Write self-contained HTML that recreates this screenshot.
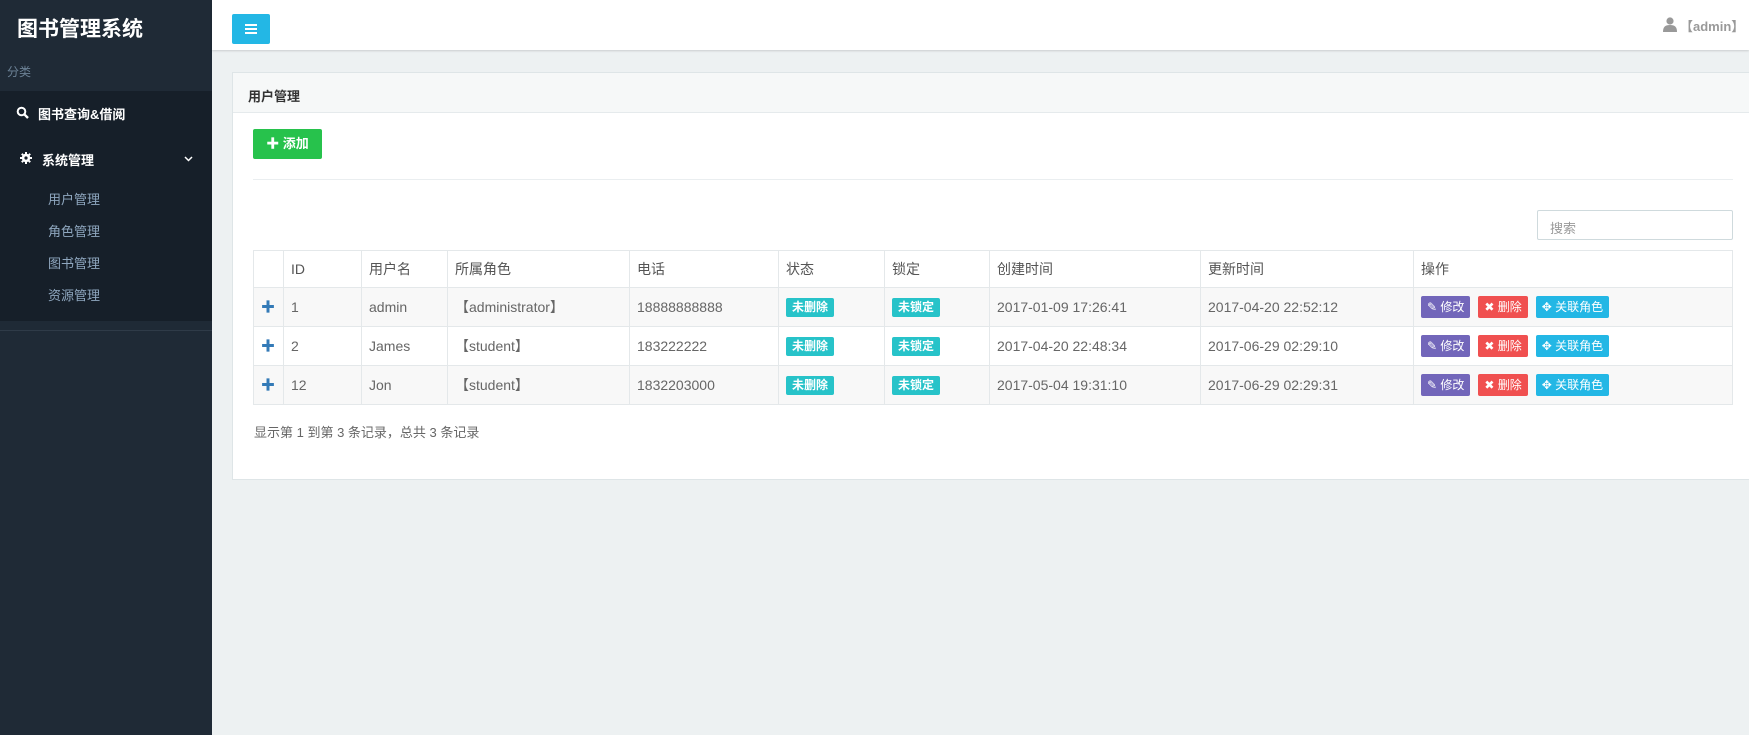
<!DOCTYPE html>
<html><head><meta charset="utf-8"><style>
*{box-sizing:border-box;margin:0;padding:0}
body{width:1749px;height:735px;overflow:hidden;background:#edf1f2;font-family:"Liberation Sans","Noto Sans CJK SC",sans-serif;position:relative;color:#58666e;font-size:14px}
.a{position:absolute}
.side{left:0;top:0;width:212px;height:735px;background:#1f2a36}
.menu{left:0;top:91px;width:212px;height:230px;background:#161f29}
.sub{color:#8fa7bf;font-size:13px;left:48px}
.top{left:212px;top:0;width:1537px;height:50px;background:#fff;box-shadow:0 1px 2px rgba(0,0,0,.15)}
table{border-collapse:collapse;position:absolute;left:253px;top:250px;width:1480px;font-size:14px;color:#666}
td{border:1px solid #e4e8ea;padding:0 7px;height:39px;white-space:nowrap}
tr:first-child td{height:37px;color:#555}
tr.s td{background:#f8f8f8}
.lb{display:inline-block;background:#27c3c9;color:#fff;font-size:12px;font-weight:bold;padding:2px 6px;border-radius:2px;line-height:15px}
.bt{display:inline-block;color:#fff;font-size:12px;padding:0 6px;border-radius:2px;line-height:22px;margin-right:8px}
</style></head><body>
<div class="a side"></div>
<div class="a menu"></div>
<div class="a" style="left:0;top:330px;width:212px;height:1px;background:#2f3b48"></div>
<div class="a" style="left:17px;top:13px;color:#fff;font-size:21px;font-weight:bold">图书管理系统</div>
<div class="a" style="left:7px;top:63px;color:#6c8296;font-size:12px">分类</div>
<svg class="a" style="left:16px;top:106px" width="13" height="13" viewBox="0 0 13 13"><circle cx="5.5" cy="5.5" r="3.8" fill="none" stroke="#fff" stroke-width="2"/><path d="M8.3 8.3L12 12" stroke="#fff" stroke-width="2.4"/></svg>
<div class="a" style="left:38px;top:104px;color:#fff;font-size:13px;font-weight:bold">图书查询&amp;借阅</div>
<svg class="a" style="left:20px;top:152px" width="12" height="12" viewBox="0 0 12 12"><circle cx="6" cy="6" r="4.2" fill="#fff"/><path d="M6 0v12M0 6h12M1.8 1.8l8.4 8.4M10.2 1.8l-8.4 8.4" stroke="#fff" stroke-width="2"/><circle cx="6" cy="6" r="1.6" fill="#161f29"/></svg>
<div class="a" style="left:42px;top:150px;color:#fff;font-size:13px;font-weight:bold">系统管理</div>
<svg class="a" style="left:184px;top:156px" width="9" height="6"><path d="M1 1l3.5 3.5L8 1" stroke="#fff" stroke-width="1.5" fill="none"/></svg>
<div class="a sub" style="top:189px">用户管理</div>
<div class="a sub" style="top:221px">角色管理</div>
<div class="a sub" style="top:253px">图书管理</div>
<div class="a sub" style="top:285px">资源管理</div>
<div class="a top"></div>
<div class="a" style="left:232px;top:14px;width:38px;height:30px;background:#23b7e5;border-radius:2px"></div>
<div class="a" style="left:245px;top:24px;width:12px;height:2px;background:#fff;box-shadow:0 4px 0 #fff,0 8px 0 #fff"></div>
<svg class="a" style="left:1663px;top:17px" width="14" height="15" viewBox="0 0 14 15"><circle cx="7" cy="4" r="3.6" fill="#999"/><path d="M0 15c0-5 2-7 7-7s7 2 7 7z" fill="#999"/></svg>
<div class="a" style="left:1680px;top:16px;color:#999;font-size:13px;font-weight:bold">【admin】</div>
<div class="a" style="left:232px;top:72px;width:1530px;height:408px;background:#fff;border:1px solid #dee5e7"></div>
<div class="a" style="left:233px;top:73px;width:1530px;height:40px;background:#f6f8f8;border-bottom:1px solid #e5eaec"></div>
<div class="a" style="left:248px;top:86px;color:#333;font-size:13px;font-weight:bold">用户管理</div>
<div class="a" style="left:253px;top:129px;width:69px;height:30px;background:#27c24c;border-radius:2px;color:#fff;font-size:13px;font-weight:bold;line-height:30px;text-align:center">✚ 添加</div>
<div class="a" style="left:253px;top:179px;width:1480px;height:1px;background:#eaeef0"></div>
<div class="a" style="left:1537px;top:210px;width:196px;height:30px;border:1px solid #cfdadd;border-radius:2px;color:#999;font-size:13px;padding:7px 12px">搜索</div>
<table>
<tr><td style="width:30px"></td><td style="width:78px">ID</td><td style="width:86px">用户名</td><td style="width:182px">所属角色</td><td style="width:149px">电话</td><td style="width:106px">状态</td><td style="width:105px">锁定</td><td style="width:211px">创建时间</td><td style="width:213px">更新时间</td><td>操作</td></tr>
<tr class="s"><td style="color:#337ab7;font-weight:bold">✚</td><td>1</td><td>admin</td><td>【administrator】</td><td>18888888888</td><td><span class="lb">未删除</span></td><td><span class="lb">未锁定</span></td><td>2017-01-09 17:26:41</td><td>2017-04-20 22:52:12</td><td><span class="bt" style="background:#7266ba">&#9998; 修改</span><span class="bt" style="background:#f05050">✖ 删除</span><span class="bt" style="background:#23b7e5">✥ 关联角色</span></td></tr>
<tr><td style="color:#337ab7;font-weight:bold">✚</td><td>2</td><td>James</td><td>【student】</td><td>183222222</td><td><span class="lb">未删除</span></td><td><span class="lb">未锁定</span></td><td>2017-04-20 22:48:34</td><td>2017-06-29 02:29:10</td><td><span class="bt" style="background:#7266ba">&#9998; 修改</span><span class="bt" style="background:#f05050">✖ 删除</span><span class="bt" style="background:#23b7e5">✥ 关联角色</span></td></tr>
<tr class="s"><td style="color:#337ab7;font-weight:bold">✚</td><td>12</td><td>Jon</td><td>【student】</td><td>1832203000</td><td><span class="lb">未删除</span></td><td><span class="lb">未锁定</span></td><td>2017-05-04 19:31:10</td><td>2017-06-29 02:29:31</td><td><span class="bt" style="background:#7266ba">&#9998; 修改</span><span class="bt" style="background:#f05050">✖ 删除</span><span class="bt" style="background:#23b7e5">✥ 关联角色</span></td></tr>
</table>
<div class="a" style="left:254px;top:422px;color:#666;font-size:13px">显示第 1 到第 3 条记录，总共 3 条记录</div>
</body></html>
